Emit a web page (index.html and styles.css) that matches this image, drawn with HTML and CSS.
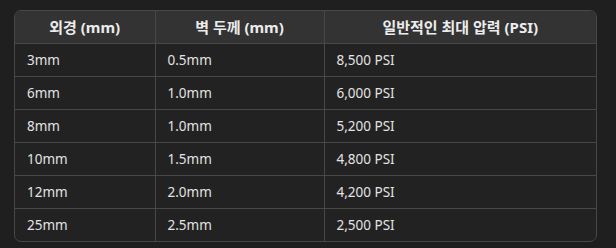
FILE: index.html
```html
<!DOCTYPE html>
<html lang="ko">
<head>
<meta charset="utf-8">
<link rel="stylesheet" href="styles.css">
</head>
<body>
<div class="wrap">
<table class="tbl">
<colgroup><col class="c1"><col class="c2"><col class="c3"></colgroup>
<thead>
<tr><th>외경 (mm)</th><th>벽 두께 (mm)</th><th>일반적인 최대 압력 (PSI)</th></tr>
</thead>
<tbody>
<tr><td>3mm</td><td>0.5mm</td><td>8,500 PSI</td></tr>
<tr><td>6mm</td><td>1.0mm</td><td>6,000 PSI</td></tr>
<tr><td>8mm</td><td>1.0mm</td><td>5,200 PSI</td></tr>
<tr><td>10mm</td><td>1.5mm</td><td>4,800 PSI</td></tr>
<tr><td>12mm</td><td>2.0mm</td><td>4,200 PSI</td></tr>
<tr><td>25mm</td><td>2.5mm</td><td>2,500 PSI</td></tr>
</tbody>
</table>
</div>
</body>
</html>
```
FILE: styles.css
```css
html, body {
  background: #1f1f1f;
}
body {
  margin: 0;
  padding: 10px 0 0 14px;
  font-family: "Noto Sans", "Noto Sans CJK KR", sans-serif;
  font-size: 13.5px;
  color: #e3e3e3;
}
.wrap {
  width: 581px;
  border: 1px solid #484848;
  border-radius: 7px;
  overflow: hidden;
  background: #222222;
}
.tbl {
  width: 100%;
  border-collapse: collapse;
  table-layout: fixed;
}
.c1 { width: 140px; }
.c2 { width: 169px; }
.c3 { width: auto; }
.tbl th, .tbl td {
  padding: 2px 12px 0;
  box-sizing: border-box;
  border-left: 1px solid #484848;
  border-top: 1px solid #484848;
  line-height: 1;
}
.tbl tr > :first-child { border-left: none; }
.tbl thead th {
  height: 32px;
  border-top: none;
  background: #333333;
  font-size: 15px;
  font-weight: 700;
  text-align: center;
  color: #ececec;
}
.tbl td {
  text-align: left;
  height: 33px;
}
```
